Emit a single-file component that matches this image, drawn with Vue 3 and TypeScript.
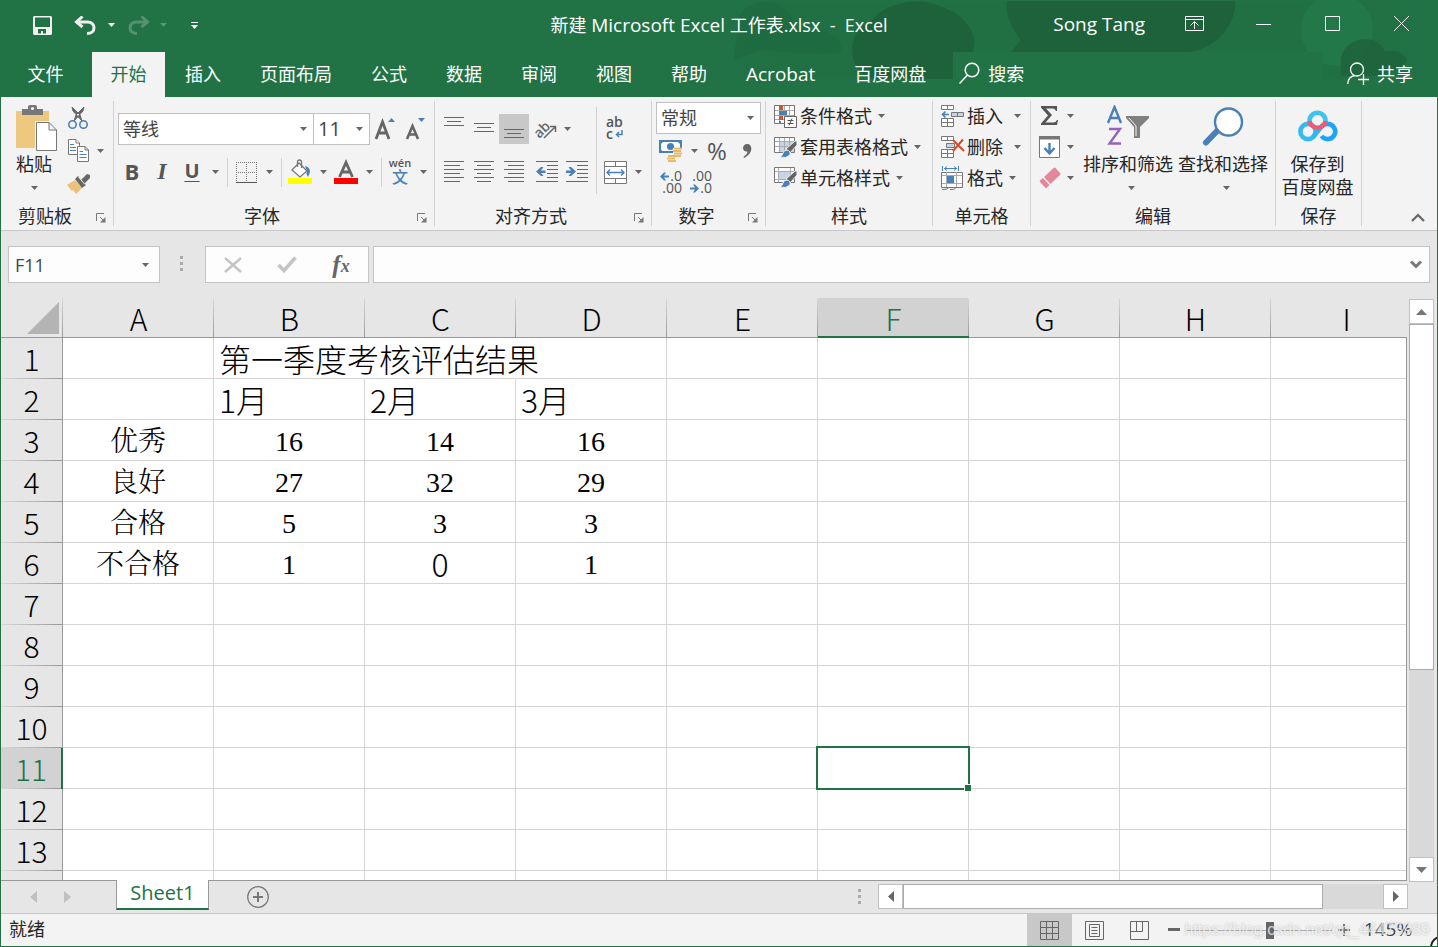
<script setup lang="ts">
import { h, ref } from 'vue'

interface Cell {
  text: string
  kind: 'plain' | 'song'
}

const Caret = () =>
  h('svg', { class: 'caret', width: 7, height: 4, viewBox: '0 0 7 4', 'aria-hidden': 'true' }, [
    h('path', { d: 'M0 0H7L3.5 4Z', fill: 'currentColor' }),
  ])

const Launcher = () =>
  h('svg', { width: 10, height: 10, viewBox: '0 0 10 10', fill: 'none', stroke: '#777' }, [
    h('path', { d: 'M.5 8V.5H8M4 4L8 8' }),
    h('path', { d: 'M9.5 4V9.5H4Z', fill: '#777', stroke: 'none' }),
  ])

const tabs = ['插入', '页面布局', '公式', '数据', '审阅', '视图', '帮助', 'Acrobat', '百度网盘']
const columns = ['A', 'B', 'C', 'D', 'E', 'F', 'G', 'H', 'I']
const rowCount = 14
const activeColumn = 'F'
const activeRow = 11

const plain = (text: string): Cell => ({ text, kind: 'plain' })
const song = (text: string): Cell => ({ text, kind: 'song' })

const cells: Record<string, Cell> = {
  B1: plain('第一季度考核评估结果'),
  B2: plain('1月'), C2: plain('2月'), D2: plain('3月'),
  A3: song('优秀'), B3: song('16'), C3: song('14'), D3: song('16'),
  A4: song('良好'), B4: song('27'), C4: song('32'), D4: song('29'),
  A5: song('合格'), B5: song('5'), C5: song('3'), D5: song('3'),
  A6: song('不合格'), B6: song('1'), C6: plain('0'), D6: song('1'),
}

const centered = new Set(['C6'])
const spilled = new Set(['B1', 'C1'])

const fontName = ref('等线')
const fontSize = ref('11')
const numberFormat = ref('常规')
const nameBox = ref('F11')
const formula = ref('')
const zoomPosition = ref(58)

function cellClass(col: string, row: number) {
  const key = col + row
  return {
    song: cells[key]?.kind === 'song',
    centered: centered.has(key),
    spilled: spilled.has(key),
    active: col === activeColumn && row === activeRow,
  }
}
</script>

<template>
  <div class="window">
    <header class="top">
      <svg class="pattern" width="760" height="79" viewBox="0 0 760 79" aria-hidden="true">
        <defs>
          <linearGradient id="fade" x1="0" x2="1" y1="0" y2="0">
            <stop offset="0" stop-color="#206e43" stop-opacity="0" />
            <stop offset=".15" stop-color="#206e43" stop-opacity=".6" />
            <stop offset=".9" stop-color="#206e43" stop-opacity=".6" />
            <stop offset="1" stop-color="#206e43" stop-opacity=".2" />
          </linearGradient>
        </defs>
        <path d="M0 1H760V79H0Z" fill="url(#fade)" />
        <path d="M60 36C56 16 70 2 88 2S118 14 116 30C140 24 168 34 164 52C140 58 100 48 80 52L56 60Z" fill="#1f673f" opacity=".6" />
        <path d="M196 79C168 70 168 30 196 20C206 4 240 -4 262 6C290 14 300 36 297 46C296 56 292 64 290 79Z" fill="#1e623c" />
        <path d="M330 1H558C560 18 546 38 534 44C526 49 516 52 510 52H334L344 40C334 28 328 14 330 1Z" fill="#1e623c" />
        <circle cx="660" cy="30" r="36" fill="#237849" />
        <path d="M664 62C664 36 702 32 708 52C718 48 728 54 730 60C726 70 710 72 700 76H664Z" fill="#1e623c" opacity=".8" />
      </svg>

      <div class="titlebar">
        <div class="quick">
          <button class="qbtn" aria-label="保存">
            <svg width="19" height="19" viewBox="0 0 19 19"><path fill="#f0f0f0" fill-rule="evenodd" d="M1 0H18L19 1V18L18 19H1L0 18V1ZM2 1.5V11H17V1.5ZM5 13V17.5H8V15H10V17.5H13V13Z" /></svg>
          </button>
          <button class="qbtn undo" aria-label="撤消">
            <svg width="22" height="19" viewBox="0 0 22 19" fill="none" stroke="#f0f0f0" stroke-width="3"><path d="M2 6H13.5C18 6 20 9 20 12S17.5 17.5 13 17.5" /><path d="M8.5 0.5L2.5 6L8.5 11" /></svg>
          </button>
          <button class="qcaret" aria-label="撤消选项"><Caret /></button>
          <button class="qbtn redo faded" aria-label="恢复">
            <svg width="22" height="19" viewBox="0 0 22 19" fill="none" stroke="#f0f0f0" stroke-width="3"><path d="M20 6H8.5C4 6 2 9 2 12S4.500 17.5 9 17.5" /><path d="M13.5 .5L19.500 6L13.500 11" /></svg>
          </button>
          <button class="qcaret narrow faded" aria-label="恢复选项"><Caret /></button>
          <button class="qcustom" aria-label="自定义快速访问工具栏">
            <svg width="7" height="7" viewBox="0 0 7 7"><path d="M0 0H7V1H0ZM0 3H7L3.5 7Z" fill="#fff" /></svg>
          </button>
        </div>
        <h1 class="title">新建 <span class="latin">Microsoft Excel</span> 工作表.xlsx&nbsp; -&nbsp; Excel</h1>
        <div class="controls">
          <span class="user latin">Song Tang</span>
          <button class="wbtn" aria-label="功能区显示选项">
            <svg width="19" height="15" viewBox="0 0 19 15" fill="none" stroke="#fff"><path d="M.5 .5H18.5V14.5H.5ZM.5 3.500H18.500M9.500 13V6M5.500 9.500L9.500 5.500L13.500 9.500" /></svg>
          </button>
          <button class="wbtn" aria-label="最小化">
            <svg width="15" height="15" viewBox="0 0 15 15" stroke="#fff"><path d="M0 8.500H15" /></svg>
          </button>
          <button class="wbtn" aria-label="最大化">
            <svg width="15" height="15" viewBox="0 0 15 15" fill="none" stroke="#fff"><path d="M.5 .5H14.500V14.500H.5Z" /></svg>
          </button>
          <button class="wbtn" aria-label="关闭">
            <svg width="15" height="15" viewBox="0 0 15 15" stroke="#fff"><path d="M0 0L15 15M15 0L0 15" /></svg>
          </button>
        </div>
      </div>

      <nav class="tabs">
        <button class="tab file">文件</button>
        <button class="tab current">开始</button>
        <button v-for="t in tabs" :key="t" class="tab" :class="{ latin: t === 'Acrobat' }">{{ t }}</button>
        <button class="search">
          <svg width="21" height="23" viewBox="0 0 21 23" fill="none" stroke="#fff" stroke-width="1.500"><circle cx="13" cy="8" r="6.800" /><path d="M8.500 13L.5 21.500" /></svg>
          搜索
        </button>
        <button class="share">
          <svg width="22" height="23" viewBox="0 0 22 23" fill="none" stroke="#fff" stroke-width="1.300"><circle cx="10" cy="7.500" r="6.500" /><path d="M.7 22C1 17 4 14 8 13.500M16.500 12V23M11 17.500H22" /></svg>
          共享
        </button>
      </nav>
    </header>

    <section class="ribbon">
      <div class="group g-clip">
        <div class="body">
          <button class="big paste">
            <span class="art">
              <svg width="42" height="46" viewBox="0 0 42 46"><path d="M1 6H34V43H1Z" fill="#edc87e" /><path d="M7 4H13V2Q13 0 15 0H20Q22 0 22 2V4H28V10H7Z" fill="#777" /><circle cx="17.500" cy="3.500" r="1.600" fill="#f3f3f3" /><path d="M20 16H35L42 23V46H20Z" fill="#f3f3f3" /><path d="M21.500 17.500H34L41.500 25V45.500H21.500ZM34 17.500V25H41.500" fill="#fff" stroke="#777" /></svg>
            </span>
            <span>粘贴</span>
            <span class="second"><Caret /></span>
          </button>
          <div class="clipcol">
            <button aria-label="剪切">
              <svg width="20" height="22" viewBox="0 0 20 22" fill="none"><path d="M4 0L5 4L14 14L12 8ZM16 0L15 4L6 14L8 8Z" fill="#666" stroke="#666" /><circle cx="4.500" cy="17.500" r="3.700" stroke="#4a80b8" stroke-width="1.600" /><circle cx="15.500" cy="17.500" r="3.700" stroke="#4a80b8" stroke-width="1.600" /></svg>
            </button>
            <div class="pair">
              <button aria-label="复制">
                <svg width="21" height="23" viewBox="0 0 21 23" fill="#fff"><path d="M.5 .5H8L11.500 4V15.500H.5Z" stroke="#777" /><path d="M8 .5V4H11.500" stroke="#777" /><path d="M2 5.500H6M2 8.500H8M2 11.500H8" stroke="#4a80b8" /><path d="M9.500 7.500H17L20.500 11V22.500H9.500ZM17 7.500V11H20.500" stroke="#777" /><path d="M11.500 12.500H15M11.500 15.500H18.500M11.500 18.500H18.500" stroke="#4a80b8" /></svg>
              </button>
              <button class="cbtn" aria-label="复制选项"><Caret /></button>
            </div>
            <button aria-label="格式刷">
              <svg width="23" height="20" viewBox="0 0 23 20"><path d="M0 11L8 6L15 14L9 20L6 16L5 17Z" fill="#e9c179" /><path d="M8 5L11 2L19 11L15 14Z" fill="#666" /><path d="M14 6L20 0L23 1V4L17 10Z" fill="#666" /><path d="M11.500 3L18 10.500" stroke="#f3f3f3" /></svg>
            </button>
          </div>
        </div>
        <div class="label"><span>剪贴板</span><button aria-label="剪贴板设置"><Launcher /></button></div>
      </div>

      <div class="group g-font">
        <div class="body column">
          <div class="row first">
            <label class="combo name"><select v-model="fontName" aria-label="字体"><option>等线</option></select><Caret /></label>
            <label class="combo size"><select v-model="fontSize" aria-label="字号"><option>11</option></select><Caret /></label>
            <button class="ibtn" aria-label="增大字号">
              <svg width="22" height="24" viewBox="0 0 22 24"><path d="M2 22L8.500 5L15 22M4.500 16H12.500" fill="none" stroke="#666" stroke-width="2.800" /><path d="M14 5L17.500 1L21 5Z" fill="#4a80b8" /></svg>
            </button>
            <button class="ibtn" aria-label="减小字号">
              <svg width="22" height="24" viewBox="0 0 22 24"><path d="M3 22L8.500 9L14 22M5 17.500H12" fill="none" stroke="#666" stroke-width="2.600" /><path d="M14 1H21L17.500 5Z" fill="#4a80b8" /></svg>
            </button>
          </div>
          <div class="row">
            <button class="ibtn letter bold">B</button>
            <button class="ibtn letter italic">I</button>
            <button class="ibtn letter under">U</button>
            <button class="cbtn" aria-label="下划线选项"><Caret /></button>
            <i class="sep"></i>
            <button class="ibtn" aria-label="边框">
              <svg width="21" height="21" viewBox="0 0 21 21" fill="none" stroke="#777" shape-rendering="crispEdges"><path d="M.5 0V20M10.500 0V20M20.500 0V20M0 .5H21M0 10.500H21" stroke-dasharray="1 1" /><path d="M0 20.500H21" stroke="#555" /></svg>
            </button>
            <button class="cbtn" aria-label="边框选项"><Caret /></button>
            <i class="sep"></i>
            <button class="ibtn" aria-label="填充颜色">
              <svg width="24" height="26" viewBox="0 0 24 26"><path d="M4 11L11 4L19 12L12 18Z" fill="#fff" stroke="#777" stroke-width="1.300" /><path d="M9.500 8V3Q9.500 1 11.500 1T13.500 3V9" fill="none" stroke="#777" stroke-width="1.300" /><path d="M17 7Q22 8 22 13L20 18L18.500 15L19 12Z" fill="#4a80b8" /><path d="M0 19H24V25H0Z" fill="#ff0" /></svg>
            </button>
            <button class="cbtn" aria-label="填充颜色选项"><Caret /></button>
            <button class="ibtn" aria-label="字体颜色">
              <svg width="24" height="26" viewBox="0 0 24 26"><path d="M5.500 18L12 3.500L18.500 18M8 13H16" fill="none" stroke="#666" stroke-width="2.800" /><path d="M0 19H24V25H0Z" fill="#f00" /></svg>
            </button>
            <button class="cbtn" aria-label="字体颜色选项"><Caret /></button>
            <i class="sep"></i>
            <button class="ibtn wen"><span>wén</span><b>文</b></button>
            <button class="cbtn" aria-label="拼音选项"><Caret /></button>
          </div>
        </div>
        <div class="label"><span>字体</span><button aria-label="字体设置"><Launcher /></button></div>
      </div>

      <div class="group g-align">
        <div class="body">
          <div class="column">
            <div class="row first">
              <button class="ibtn" aria-label="顶端对齐"><svg class="lines" width="20" height="24" viewBox="0 0 20 24"><path d="M0 .5H20M3 4.500H17M0 8.500H20" /></svg></button>
              <button class="ibtn" aria-label="垂直居中"><svg class="lines" width="20" height="24" viewBox="0 0 20 24"><path d="M0 6.500H20M3 10.500H17M0 14.500H20" /></svg></button>
              <button class="ibtn on" aria-label="底端对齐"><svg class="lines" width="20" height="24" viewBox="0 0 20 24"><path d="M0 12.500H20M3 16.500H17M0 20.500H20" /></svg></button>
              <button class="ibtn gap" aria-label="方向">
                <svg width="24" height="24" viewBox="0 0 24 24"><text x="-2" y="17" transform="rotate(-45 7 12)" font-family="Open Sans" font-size="14" font-weight="600" fill="#666">ab</text><path d="M9 21L20 10M15 9.500H20.500V15" fill="none" stroke="#666" stroke-width="1.500" /></svg>
              </button>
              <button class="cbtn tight" aria-label="方向选项"><Caret /></button>
            </div>
            <div class="row">
              <button class="ibtn" aria-label="左对齐"><svg class="lines" width="20" height="22" viewBox="0 0 20 22"><path d="M0 .5H20M0 4.500H16M0 8.500H20M0 12.500H16M0 16.500H20M0 20.500H16" /></svg></button>
              <button class="ibtn" aria-label="居中"><svg class="lines" width="20" height="22" viewBox="0 0 20 22"><path d="M0 .5H20M3 4.500H17M0 8.500H20M3 12.500H17M0 16.500H20M3 20.500H17" /></svg></button>
              <button class="ibtn" aria-label="右对齐"><svg class="lines" width="20" height="22" viewBox="0 0 20 22"><path d="M0 .5H20M4 4.500H20M0 8.500H20M4 12.500H20M0 16.500H20M4 20.500H20" /></svg></button>
              <button class="ibtn gap" aria-label="减少缩进量"><svg class="lines" width="22" height="22" viewBox="0 0 22 22"><path d="M0 .5H22M11 4.500H22M11 8.500H22M11 12.500H22M11 16.500H22M0 20.500H22" /><path d="M0 10.500L5 6H7.500L5 9.500H9.500V12H5L7.500 15H5Z" fill="#4a80b8" stroke="none" shape-rendering="auto" /></svg></button>
              <button class="ibtn" aria-label="增加缩进量"><svg class="lines" width="22" height="22" viewBox="0 0 22 22"><path d="M0 .5H22M11 4.500H22M11 8.500H22M11 12.500H22M11 16.500H22M0 20.500H22" /><path d="M10 10.500L5 6H2.500L5 9.500H0V12H5L2.500 15H5Z" fill="#4a80b8" stroke="none" shape-rendering="auto" /></svg></button>
            </div>
          </div>
          <i class="sep tall"></i>
          <div class="column">
            <div class="row first">
              <button class="ibtn wrap"><span>ab</span><span>c<svg width="8" height="8" viewBox="0 0 8 8" fill="none" stroke="#4a80b8" stroke-width="1.500"><path d="M7 0V4.500H1.500M4 2L1.500 4.500L4 7" /></svg></span></button>
            </div>
            <div class="row">
              <button class="ibtn" aria-label="合并后居中">
                <svg width="23" height="23" viewBox="0 0 23 23" fill="#fff" stroke="#777"><path d="M.5 .5H22.500V22.500H.5ZM0 5.500H23M0 17.500H23M11.500 0V5.500M11.500 17.500V23" /><path d="M3 11.500H20M6 8.500L3 11.500L6 14.500M17 8.500L20 11.500L17 14.500" fill="none" stroke="#4a80b8" stroke-width="1.400" /></svg>
              </button>
              <button class="cbtn" aria-label="合并选项"><Caret /></button>
            </div>
          </div>
        </div>
        <div class="label"><span>对齐方式</span><button aria-label="对齐设置"><Launcher /></button></div>
      </div>

      <div class="group g-num">
        <div class="body column">
          <label class="combo format"><select v-model="numberFormat" aria-label="数字格式"><option>常规</option></select><Caret /></label>
          <div class="row money">
            <button class="ibtn" aria-label="会计数字格式">
              <svg width="24" height="24" viewBox="0 0 24 24"><path d="M0 1H23V14H0Z" fill="#4a80b8" /><path d="M2 3H21V12H2Z" fill="#fff" /><circle cx="11.500" cy="7.500" r="3.600" fill="#4a80b8" /><path d="M1 3V6L5 2H2ZM1 12V9L4 13ZM22 3V6L18 2H21Z" fill="#4a80b8" /><path d="M14 9H23V18H17V23H8V16H14Z" fill="#f3f3f3" /><path d="M15 9.500H23M14 12H22M15 14.500H23M14 17H22M9 17H17M8 19.500H16M9 22H17" stroke="#e9b96b" stroke-width="1.800" /></svg>
            </button>
            <button class="cbtn" aria-label="会计格式选项"><Caret /></button>
            <button class="ibtn percent">%</button>
            <button class="ibtn" aria-label="千位分隔样式"><svg width="10" height="16" viewBox="0 0 10 16"><path d="M5 1C8 1 9.500 3 9.300 6C9 10 6 13 2 15L1.500 14C4 12 5.500 10.500 5.500 8.500C3 9 1 7.500 1 5C1 3 2.800 1 5 1Z" fill="#666" /></svg></button>
          </div>
          <div class="row">
            <button class="ibtn dec"><span><svg width="9" height="9" viewBox="0 0 9 9"><path d="M0 4.500L4 .5H6L4 3.500H9V5.500H4L6 8.500H4Z" fill="#4a80b8" /></svg>.0</span><span>.00</span></button>
            <button class="ibtn dec"><span>.00</span><span><svg width="9" height="9" viewBox="0 0 9 9"><path d="M9 4.500L5 .5H3L5 3.500H0V5.500H5L3 8.500H5Z" fill="#4a80b8" /></svg>.0</span></button>
          </div>
        </div>
        <div class="label"><span>数字</span><button aria-label="数字设置"><Launcher /></button></div>
      </div>

      <div class="group g-style">
        <div class="body column list">
          <button>
            <svg width="24" height="24" viewBox="0 0 24 24"><path d="M.5 1.500H20.500V19.500H.5Z" fill="#fff" stroke="#777" /><path d="M5.500 2V19M10.500 2V19M15.500 2V19M1 6.500H20M1 11.500H20M1 15.500H20" stroke="#aaa" /><path d="M5 2H9V6H5ZM5 12H9V16H5Z" fill="#d35230" /><path d="M5 7H13V11H5ZM5 17H7V19H5Z" fill="#4a80b8" /><path d="M10.500 12.500H22.500V23.500H10.500Z" fill="#fff" stroke="#666" /><path d="M13.500 16.500H19.500M13.500 19.500H19.500M18 14.500L15 21.500" stroke="#555" /></svg>
            条件格式<Caret />
          </button>
          <button>
            <svg width="24" height="24" viewBox="0 0 24 24"><path d="M.5 2.500H20.500V17.500H.5Z" fill="#fff" stroke="#777" /><path d="M6 7H20V17H6Z" fill="#c5d5e8" /><path d="M5.500 3V17M10.500 3V17M15.500 3V17M1 6.500H20M1 11.500H20" stroke="#aaa" /><path d="M23 6V10L16 18L12 14L21 6Z" fill="#666" stroke="#f3f3f3" /><path d="M13 15Q17 16 16 20Q12 24 6 22Q9 20 9 18Q10 15 13 15Z" fill="#4a80b8" stroke="#f3f3f3" /></svg>
            套用表格格式<Caret />
          </button>
          <button>
            <svg width="24" height="24" viewBox="0 0 24 24"><path d="M.5 1.500H20.500V16.500H.5Z" fill="#fff" stroke="#777" /><path d="M5 6H16V13H5Z" fill="#c5d5e8" /><path d="M4.500 2V16M16.500 2V16M1 5.500H20M1 13.500H20" stroke="#aaa" /><path d="M23 5V9L16 17L12 13L21 5Z" fill="#666" stroke="#f3f3f3" /><path d="M13 14Q17 15 16 19Q12 23 6 21Q9 19 9 17Q10 14 13 14Z" fill="#4a80b8" stroke="#f3f3f3" /></svg>
            单元格样式<Caret />
          </button>
        </div>
        <div class="label"><span>样式</span></div>
      </div>

      <div class="group g-cell">
        <div class="body column list">
          <button class="split">
            <svg width="24" height="24" viewBox="0 0 24 24" fill="#fff" stroke="#777"><path d="M.5 1.500H12.500V5.500H.5ZM6.500 1.500V5.500M.5 14.500H12.500V22.500H.5ZM6.500 14.500V22.500M.5 18.500H12.500" /><path d="M10.500 8.500H22.500V12.500H10.500ZM16.500 8.500V12.500" fill="#c5d5e8" /><path d="M8 10.500H1.500M4.500 7.500L1.500 10.500L4.500 13.500" fill="none" stroke="#4a80b8" stroke-width="1.600" /></svg>
            插入<Caret />
          </button>
          <button class="split">
            <svg width="24" height="24" viewBox="0 0 24 24" fill="#fff" stroke="#777"><path d="M.5 1.500H12.500V5.500H.5ZM6.500 1.500V5.500M.5 14.500H12.500V22.500H.5ZM6.500 14.500V22.500M.5 18.500H12.500" /><path d="M5.500 8.500H13.500V12.500H5.500Z" fill="#c5d5e8" /><path d="M12 5L23 16M22 4.500L12 16" stroke="#d84b28" stroke-width="2" /></svg>
            删除<Caret />
          </button>
          <button>
            <svg width="24" height="24" viewBox="0 0 24 24" fill="none" stroke="#777"><path d="M.5 6.500H21.500V21.500H.5Z" fill="#fff" /><path d="M5.500 6V21M15.500 6V21M1 9.500H21M1 17.500H21" stroke="#aaa" /><path d="M6 10H13V17H6Z" fill="#4a80b8" stroke="none" /><path d="M1.500 0V5M17.500 0V5M3 2.500H16M6 .5L3.500 2.500L6 4.500M13 .5L15.500 2.500L13 4.500" stroke="#4a80b8" /><path d="M1 23.500Q6 24 8 21.500M9 23.500Q14 24 15 21.500" /></svg>
            格式<Caret />
          </button>
        </div>
        <div class="label"><span>单元格</span></div>
      </div>

      <div class="group g-edit">
        <div class="body">
          <div class="column list editcol">
            <button aria-label="自动求和"><svg width="22" height="22" viewBox="0 0 22 22"><path d="M2 1H18V6H17Q16 3.500 14 3.500H7L13 10L6.500 17.500H14Q17 17.500 18 15H19L18 20H2V18.500L9 10.500L2 2.500Z" fill="#555" /></svg><Caret /></button>
            <button aria-label="填充"><svg width="22" height="22" viewBox="0 0 22 22"><path d="M.5 .5H20.500V21.500H.5Z" fill="#fff" stroke="#777" /><path d="M0 0H21V3.500H0Z" fill="#777" /><path d="M10.500 7V17M5.500 12L10.500 17.500L15.500 12" fill="none" stroke="#4a80b8" stroke-width="2.400" /></svg><Caret /></button>
            <button aria-label="清除"><svg width="22" height="22" viewBox="0 0 22 22"><path d="M14.500 1Q15.500 0 16.500 1L21 6Q22 7 21 8L11.500 17L5 10Z" fill="#e4879b" /><path d="M4 11L10.500 18L8 20.500Q7 21.500 6 20.500L1 15Q0 14 1.500 13Z" fill="#e4879b" /></svg><Caret /></button>
          </div>
          <button class="big">
            <span class="art">
              <svg width="44" height="44" viewBox="0 0 44 44"><path d="M2 18L8.500 2L15 18M4.500 13H12.500" fill="none" stroke="#4a80b8" stroke-width="2.400" /><path d="M3 24H14L3.500 38.500H15" fill="none" stroke="#9364b8" stroke-width="2.400" /><path d="M20 11H43V13L34 22V33H28V22L20 13Z" fill="#808080" /><path d="M23 13L30 21V31" stroke="#f3f3f3" fill="none" /></svg>
            </span>
            <span>排序和筛选</span>
            <span class="second menu"><Caret /></span>
          </button>
          <button class="big find">
            <span class="art">
              <svg width="42" height="44" viewBox="0 0 42 44"><path d="M15 26L4 37.500" stroke="#4a80b8" stroke-width="6" stroke-linecap="round" /><circle cx="26.500" cy="17" r="13.500" fill="#fff" stroke="#4a80b8" stroke-width="2.400" /></svg>
            </span>
            <span>查找和选择</span>
            <span class="second menu"><Caret /></span>
          </button>
        </div>
        <div class="label"><span>编辑</span></div>
      </div>

      <div class="group g-save">
        <div class="body">
          <button class="big">
            <span class="art">
              <svg width="40" height="36" viewBox="0 0 40 36" fill="none" stroke-width="4.600">
                <circle cx="10" cy="22.500" r="7.600" stroke="#33bbf0" />
                <path d="M15 28L24.500 16.500" stroke="#2fb6f2" />
                <path d="M23 18Q26 14.500 30 14.900A7.600 7.600 0 1 1 23.500 27" stroke="#1ea4fb" />
                <path d="M11.700 13.500A8 8 0 1 1 27.300 13.500" stroke="#3cc3ee" />
                <path d="M11.600 12A8 8 0 0 0 27.400 12" stroke="#f9566f" />
              </svg>
            </span>
            <span>保存到</span>
            <span class="second">百度网盘</span>
          </button>
        </div>
        <div class="label"><span>保存</span></div>
      </div>

      <button class="collapse" aria-label="折叠功能区">
        <svg width="14" height="9" viewBox="0 0 14 9" fill="none" stroke="#666" stroke-width="2.200"><path d="M1 8L7 2L13 8" /></svg>
      </button>
    </section>

    <section class="formulabar">
      <label class="namebox"><input v-model="nameBox" aria-label="名称框" /><Caret /></label>
      <i class="dots"></i>
      <div class="fxbox">
        <button aria-label="取消"><svg width="18" height="16" viewBox="0 0 18 16" stroke="#c4c4c4" stroke-width="2.400"><path d="M1 1L17 15M17 1L1 15" /></svg></button>
        <button aria-label="输入"><svg width="20" height="17" viewBox="0 0 20 17" fill="none" stroke="#c4c4c4" stroke-width="3.600"><path d="M1.500 9L7 14.500L18.500 1.500" /></svg></button>
        <button class="fx" aria-label="插入函数"><i>f</i><i class="x">x</i></button>
      </div>
      <label class="formula">
        <input v-model="formula" aria-label="编辑栏" />
        <svg width="12" height="9" viewBox="0 0 12 9" fill="none" stroke="#777" stroke-width="3"><path d="M1 1.500L6 6.500L11 1.500" /></svg>
      </label>
    </section>

    <main class="sheet">
      <div class="grid">
        <table>
          <colgroup>
            <col class="rowcol" />
            <col v-for="c in columns" :key="c" class="datacol" />
          </colgroup>
          <thead>
            <tr>
              <td class="corner"><svg width="32" height="32" viewBox="0 0 32 32"><path d="M32 0V32H0Z" fill="#b4b4b4" /></svg></td>
              <th v-for="c in columns" :key="c" scope="col" :class="{ picked: c === activeColumn }">{{ c }}</th>
            </tr>
          </thead>
          <tbody>
            <tr v-for="r in rowCount" :key="r">
              <th scope="row" :class="{ picked: r === activeRow }">{{ r }}</th>
              <td v-for="c in columns" :key="c" :class="cellClass(c, r)">{{ cells[c + r]?.text }}</td>
            </tr>
          </tbody>
        </table>
      </div>
      <div class="vscroll">
        <button aria-label="向上滚动"><svg width="11" height="6" viewBox="0 0 11 6"><path d="M5.500 0L11 6H0Z" fill="#777" /></svg></button>
        <div class="track"><div class="thumb"></div></div>
        <button aria-label="向下滚动"><svg width="11" height="6" viewBox="0 0 11 6"><path d="M5.500 6L11 0H0Z" fill="#777" /></svg></button>
      </div>
    </main>

    <div class="sheetbar">
      <div class="arrows">
        <button aria-label="上一个工作表"><svg width="7" height="12" viewBox="0 0 7 12"><path d="M7 0V12L0 6Z" fill="#c0c0c0" /></svg></button>
        <button aria-label="下一个工作表"><svg width="7" height="12" viewBox="0 0 7 12"><path d="M0 0V12L7 6Z" fill="#c0c0c0" /></svg></button>
      </div>
      <button class="sheettab">Sheet1</button>
      <button class="add" aria-label="新工作表"><svg width="22" height="22" viewBox="0 0 22 22" fill="none" stroke="#777"><circle cx="11" cy="11" r="10.300" stroke-width="1.200" /><path d="M11 6V16M6 11H16" stroke-width="2" /></svg></button>
      <i class="dots"></i>
      <div class="hscroll">
        <button aria-label="向左滚动"><svg width="6" height="11" viewBox="0 0 6 11"><path d="M6 0V11L0 5.500Z" fill="#666" /></svg></button>
        <div class="track"><div class="thumb"></div></div>
        <button aria-label="向右滚动"><svg width="6" height="11" viewBox="0 0 6 11"><path d="M0 0V11L6 5.500Z" fill="#666" /></svg></button>
      </div>
    </div>

    <footer class="status">
      <span class="ready">就绪</span>
      <button class="view on" aria-label="普通"><svg width="19" height="19" viewBox="0 0 19 19" fill="none" stroke="#666"><path d="M.5 .5H18.500V18.500H.5ZM.5 6.500H18.500M.5 12.500H18.500M6.500 .5V18.500M12.500 .5V18.500" /></svg></button>
      <button class="view" aria-label="页面布局"><svg width="19" height="19" viewBox="0 0 19 19" fill="none" stroke="#666"><path d="M.5 .5H18.500V18.500H.5ZM4.500 3.500H14.500V15.500H4.500ZM6.500 6.500H12.500M6.500 9.500H12.500M6.500 12.500H12.500" /></svg></button>
      <button class="view" aria-label="分页预览"><svg width="19" height="19" viewBox="0 0 19 19" fill="none" stroke="#666"><path d="M.5 .5H18.500V18.500H.5ZM6.500 .5V10.500M12.500 .5V10.500M.5 10.500H12.500" /></svg></button>
      <button class="zoom" aria-label="缩小"><svg width="12" height="12" viewBox="0 0 12 12"><path d="M0 4H12V7H0Z" fill="#666" /></svg></button>
      <input v-model="zoomPosition" class="slider" type="range" min="0" max="100" aria-label="显示比例" />
      <button class="zoom" aria-label="放大"><svg width="12" height="12" viewBox="0 0 12 12"><path d="M0 5H12V7H0ZM5 0H7V12H5Z" fill="#777" /></svg></button>
      <button class="percentage latin">145%</button>
      <span class="mark">https://blog.csdn.net/qq_44475989</span>
      <svg class="badge" width="9" height="12" viewBox="0 0 9 12" aria-hidden="true"><circle cx="12" cy="12" r="10" fill="#fff" stroke="#222" stroke-width="2" /></svg>
    </footer>
  </div>
</template>

<style>
html,
body {
  margin: 0;
  background: #217346;
}
</style>

<style scoped>
.window {
  box-sizing: border-box;
  height: 100vh;
  min-height: 480px;
  display: flex;
  flex-direction: column;
  position: relative;
  overflow: hidden;
  border: 1px solid #217346;
  border-top: 0;
  background: #e6e6e6;
  color: #262626;
  font: 18px/24px "Open Sans", "Noto Sans CJK SC", sans-serif;
}
button,
input,
select {
  font: inherit;
  color: inherit;
  border: 0;
  padding: 0;
  margin: 0;
  background: none;
  border-radius: 0;
  outline: 0;
}
button {
  display: flex;
  align-items: center;
  justify-content: center;
  white-space: nowrap;
}
svg {
  display: block;
  flex: none;
}
.caret {
  color: #666;
}
.latin {
  font-size: 19px;
}

/* Title bar and tabs */
.top {
  flex: none;
  position: relative;
  background: #217346;
  color: #fff;
}
.pattern {
  position: absolute;
  top: 0;
  right: 0;
}
.titlebar {
  position: relative;
  height: 52px;
  display: grid;
  grid-template-columns: 1fr auto 1fr;
  align-items: start;
}
.quick {
  display: flex;
  align-items: center;
  height: 50px;
  padding-left: 30px;
}
.qbtn {
  width: 22px;
  height: 30px;
}
.undo {
  margin-left: 21px;
}
.redo {
  margin-left: 1px;
}
.qcaret {
  width: 31px;
  height: 30px;
}
.narrow {
  width: 26px;
}
.qcaret .caret {
  color: #fff;
}
.faded {
  opacity: 0.25;
}
.qcustom {
  width: 36px;
  height: 30px;
}
.title {
  margin: 0;
  font-size: 18px;
  line-height: 50px;
  font-weight: 400;
}
.controls {
  display: flex;
  align-items: center;
  justify-content: flex-end;
  padding-right: 1px;
  height: 47px;
}
.user {
  margin-right: 15px;
}
.wbtn {
  width: 69px;
  height: 47px;
}
.tabs {
  position: relative;
  height: 45px;
  display: flex;
  gap: 3px;
}
.tab {
  padding: 0 18px 2px;
}
.file {
  width: 91px;
  margin-right: -3px;
  padding-right: 20px;
}
.current {
  width: 73px;
  margin-right: -1px;
  background: #f3f3f3;
  color: #217346;
}
.search {
  flex: 1;
  align-self: stretch;
  justify-content: flex-start;
  gap: 8px;
  padding: 0 0 2px 6px;
  margin-left: 6px;
  background: linear-gradient(90deg, #217346 370px, transparent 370px);
}
.share {
  gap: 8px;
  padding: 0 24px 2px 0;
}

/* Ribbon */
.ribbon {
  flex: none;
  display: flex;
  background: #f3f3f3;
  border-bottom: 1px solid #c8c8c8;
  padding: 4px 0 4px;
}
.group {
  flex: none;
  box-sizing: border-box;
  display: flex;
  flex-direction: column;
  border-right: 1px solid #d2d2d2;
}
.body {
  height: 105px;
  display: flex;
}
.column {
  display: flex;
  flex-direction: column;
}
.row,
.pair {
  display: flex;
  align-items: center;
}
.label {
  height: 20px;
  display: flex;
  align-items: center;
  line-height: 20px;
}
.label span {
  flex: 1;
  text-align: center;
}
.label button {
  width: 24px;
  height: 20px;
  padding-top: 3px;
}
.g-clip { width: 113px; }
.g-font { width: 321px; }
.g-align { width: 217px; }
.g-num { width: 114px; }
.g-style { width: 167px; }
.g-cell { width: 98px; }
.g-edit { width: 245px; }
.g-save { width: 86px; }

.big {
  width: 90px;
  flex-direction: column;
  justify-content: flex-start;
  line-height: 23px;
}
.big .art {
  height: 52px;
  display: flex;
  align-items: center;
}
.big .second {
  height: 23px;
  display: flex;
  align-items: center;
}
.big .menu {
  padding-left: 6px;
}
.paste {
  width: 66px;
}
.paste .art {
  height: 53px;
  margin: 0 0 -1px 4px;
}
.find {
  margin-left: 5px;
}
.g-save .big {
  width: 83px;
}
.clipcol {
  display: flex;
  flex-direction: column;
  align-items: flex-start;
}
.clipcol button {
  height: 33px;
  min-width: 22px;
}
.ibtn {
  width: 30px;
  height: 30px;
}
.on {
  background: #c8c8c8;
}
.cbtn {
  width: 16px;
  height: 30px;
}
.tight {
  margin-left: -3px;
}
.gap {
  margin-left: 3px;
}
.first {
  height: 32px;
  margin: 12px 0 12px;
}
.g-font .body {
  padding-left: 3px;
}
.g-font .first {
  padding-left: 1px;
}
.g-align .body {
  padding-left: 4px;
}
.combo {
  position: relative;
  display: flex;
  align-items: center;
  box-sizing: border-box;
  height: 32px;
  background: #fff;
  border: 1px solid #c0c0c0;
}
.combo select {
  appearance: none;
  width: 100%;
  height: 30px;
  padding-left: 4px;
  color: #444;
}
.combo .caret {
  position: absolute;
  right: 6px;
}
.name {
  width: 196px;
}
.size {
  width: 57px;
  margin-left: -1px;
  font-size: 20px;
}
.letter {
  font-size: 22px;
  color: #555;
  font-weight: 700;
  padding-bottom: 2px;
}
.italic {
  font-family: "Liberation Serif", serif;
  font-style: italic;
  font-size: 24px;
}
.under {
  text-decoration: underline;
  text-decoration-thickness: 1px;
  text-underline-offset: 3px;
  font-size: 20px;
}
.sep {
  width: 1px;
  height: 29px;
  margin: 0 3px 0 4px;
  background: #d2d2d2;
}
.tall {
  height: 87px;
  margin-top: 6px;
}
.wen {
  flex-direction: column;
  color: #555;
  font-size: 11px;
  font-weight: 600;
  line-height: 10px;
}
.wen b {
  font-size: 16px;
  line-height: 18px;
  font-weight: 500;
  color: #4a80b8;
}
.lines {
  stroke: #666;
  fill: none;
  shape-rendering: crispEdges;
}
.wrap {
  flex-direction: column;
  align-items: flex-start;
  padding: 0 0 3px 6px;
  color: #555;
  font-size: 14px;
  font-weight: 600;
  line-height: 12px;
}
.wrap span {
  display: flex;
  align-items: center;
  gap: 2px;
}
.format {
  width: 105px;
  margin: 1px 0 0 4px;
}
.g-num .row {
  padding-left: 4px;
}
.money {
  height: 33px;
}
.percent {
  font-size: 24px;
  color: #555;
}
.dec {
  flex-direction: column;
  align-items: flex-end;
  padding-right: 4px;
  color: #555;
  font-size: 14px;
  line-height: 12px;
}
.dec span {
  display: flex;
  align-items: center;
  gap: 1px;
}
.list {
  padding-left: 8px;
}
.list button {
  box-sizing: border-box;
  height: 31px;
  padding-bottom: 2px;
  justify-content: flex-start;
  gap: 2px;
}
.list .caret {
  margin-left: 4px;
}
.list .split .caret {
  margin-left: 9px;
}
.editcol {
  flex: none;
  box-sizing: border-box;
  width: 44px;
  margin-right: 8px;
}
.collapse {
  margin-left: auto;
  align-self: flex-end;
  width: 38px;
  height: 18px;
}

/* Formula bar */
.formulabar {
  flex: none;
  display: flex;
  padding: 15px 7px 15px;
}
.namebox,
.fxbox,
.formula {
  box-sizing: border-box;
  height: 37px;
  display: flex;
  align-items: center;
  background: #fdfdfd;
  border: 1px solid #c3c3c3;
}
.namebox {
  width: 152px;
  padding: 0 10px 0 6px;
}
.namebox input {
  flex: 1;
  min-width: 0;
  color: #444;
}
.dots {
  flex: none;
  width: 3px;
  height: 15px;
  margin: 10px 0 0 20px;
  background: repeating-linear-gradient(#aaa 0 3px, transparent 3px 6px);
}
.fxbox {
  width: 164px;
  margin: 0 4px 0 22px;
}
.fxbox button {
  flex: 1;
  height: 34px;
}
.fx {
  font-family: "Liberation Serif", serif;
  font-size: 25px;
  font-weight: 700;
  color: #666;
}
.fx .x {
  font-size: 18px;
  padding-top: 2px;
}
.formula {
  flex: 1;
  padding: 0 7px;
}
.formula input {
  flex: 1;
}

/* Grid */
.sheet {
  flex: 1 1 0;
  min-height: 0;
  display: flex;
}
.grid {
  flex: 1;
  min-width: 0;
  overflow: hidden;
  background: linear-gradient(#e6e6e6 40px, #fff 40px);
  border-bottom: 1px solid #999;
  position: relative;
}
.grid::after {
  content: "";
  position: absolute;
  top: 39px;
  right: 0;
  bottom: 0;
  width: 1px;
  background: #999;
}
table {
  table-layout: fixed;
  width: 1421px;
  border-collapse: separate;
  border-spacing: 0;
  font-family: "Noto Sans CJK SC", sans-serif;
  font-size: 32px;
  line-height: 36px;
  color: #000;
}
.rowcol {
  width: 62px;
}
.datacol {
  width: 151px;
}
th,
td {
  box-sizing: border-box;
  height: 41px;
  padding: 0 0 1px;
  font-weight: 300;
  text-align: center;
  white-space: nowrap;
}
th {
  font-size: 30px;
}
thead th,
.corner {
  height: 40px;
  padding: 1px 0 0;
  border-bottom: 1px solid #999;
  background: linear-gradient(#d8d8d8, #999) right / 1px 100% no-repeat #e6e6e6;
}
.corner {
  padding: 0 4px 0 0;
}
.corner svg {
  margin-left: auto;
}
tbody th {
  border-right: 1px solid #999;
  background: linear-gradient(90deg, #d8d8d8, #999) bottom / 100% 1px no-repeat #e6e6e6;
}
thead th.picked {
  background-color: #d2d2d2;
  border-bottom: 2px solid #217346;
  color: #217346;
}
tbody th.picked {
  background-color: #d2d2d2;
  border-right: 2px solid #217346;
  color: #217346;
}
tbody td {
  border-right: 1px solid #d4d4d4;
  border-bottom: 1px solid #d4d4d4;
  padding-left: 5px;
  text-align: left;
}
tbody td.spilled {
  border-right-color: transparent;
}
tbody td.centered {
  padding-left: 0;
  text-align: center;
}
tbody td.song {
  padding: 3px 0 0;
  text-align: center;
  font-family: "Liberation Serif", "Noto Serif CJK SC", "Noto Sans CJK SC", serif;
  font-size: 28px;
}
.active {
  position: relative;
}
.active::before {
  content: "";
  position: absolute;
  inset: -2px;
  border: 2px solid #217346;
}
.active::after {
  content: "";
  position: absolute;
  right: -3px;
  bottom: -3px;
  width: 6px;
  height: 6px;
  background: #217346;
  border: 1px solid #fff;
  border-width: 1px 0 0 1px;
}
.vscroll {
  flex: none;
  width: 25px;
  margin: 1px 3px -1px 2px;
  display: flex;
  flex-direction: column;
  position: relative;
}
.vscroll button,
.hscroll button {
  flex: none;
  box-sizing: border-box;
  width: 25px;
  height: 25px;
  background: #fff;
  border: 1px solid #c0c0c0;
}
.track {
  flex: 1;
  background: #d9d9d9;
}
.thumb {
  box-sizing: border-box;
  background: #fff;
  border: 1px solid #ababab;
}
.vscroll .thumb {
  height: 65%;
}

/* Sheet tabs */
.sheetbar {
  flex: none;
  height: 33px;
  box-sizing: border-box;
  border-bottom: 1px solid #c6c6c6;
  display: flex;
  align-items: flex-start;
}
.arrows {
  display: flex;
  padding-left: 15px;
  width: 100px;
  height: 32px;
}
.arrows button {
  width: 34px;
}
.sheettab {
  position: relative;
  box-sizing: border-box;
  width: 93px;
  height: 30px;
  margin-top: -1px;
  padding-bottom: 2px;
  background: #fff;
  border: 1px solid #999;
  border-top: 0;
  border-bottom: 2px solid #217346;
  color: #217346;
  font-size: 20px;
}
.add {
  margin: 5px 0 0 38px;
}
.sheetbar .dots {
  margin: 8px 0 0 auto;
}
.hscroll {
  width: 530px;
  margin: 3px 29px 0 17px;
  display: flex;
}
.hscroll .thumb {
  width: 87.5%;
  height: 25px;
}

/* Status bar */
.status {
  flex: none;
  position: relative;
  height: 32px;
  display: flex;
  align-items: center;
  background: #f3f3f3;
}
.ready {
  margin: 0 auto 0 8px;
  padding-bottom: 2px;
}
.view {
  width: 45px;
  height: 32px;
}
.zoom {
  width: 24px;
  height: 30px;
}
.slider {
  appearance: none;
  width: 146px;
  height: 20px;
  background: linear-gradient(#aaa, #aaa) center / 100% 1px no-repeat;
}
.slider::-webkit-slider-thumb {
  appearance: none;
  width: 8px;
  height: 17px;
  background: #666;
}
.percentage {
  width: 64px;
  margin-right: 17px;
  padding-bottom: 2px;
  color: #444;
}
.mark {
  position: absolute;
  right: 7px;
  bottom: 4px;
  font-family: "Liberation Sans", Arial, sans-serif;
  font-size: 16px;
  color: rgba(255, 255, 255, 0.7);
  text-shadow: 0 0 2px rgba(120, 120, 120, 0.5);
  pointer-events: none;
}
.badge {
  position: absolute;
  right: -1px;
  bottom: -1px;
}
</style>
